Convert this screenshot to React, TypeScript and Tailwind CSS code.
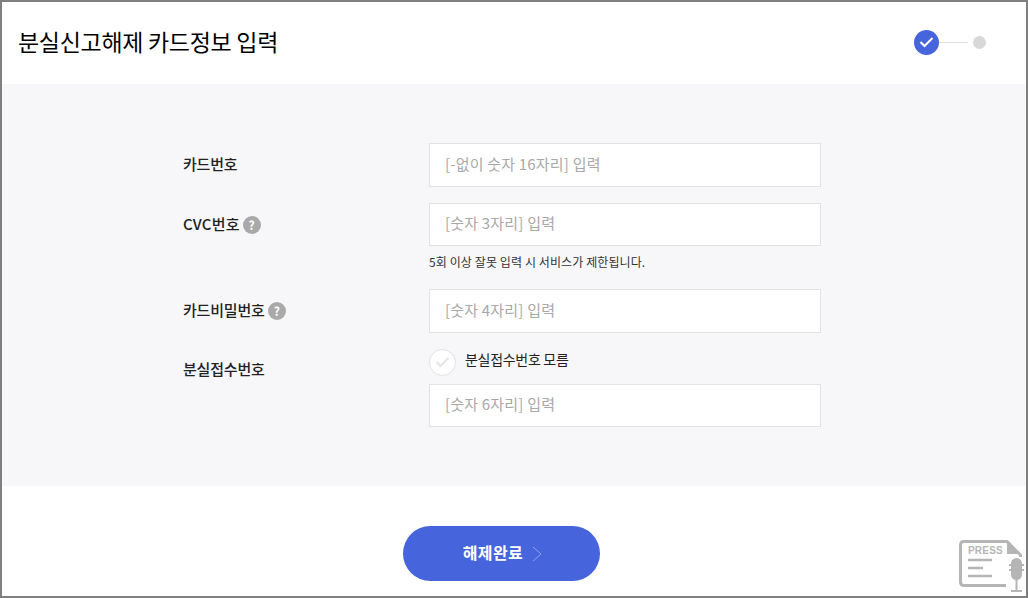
import React from "react";

function Help() {
  return (
    <span className="ml-[3px] inline-flex h-[18px] w-[18px] items-center justify-center rounded-full bg-[#a9a9a9] text-[12px] font-bold leading-none text-white">?</span>
  );
}

function Field({ placeholder, short }: { placeholder: string; short?: boolean }) {
  return (
    <div className={`flex w-[392px] items-center border border-[#e2e2e2] bg-white pb-[2px] pl-[15px] text-[15px] tracking-[0.2px] text-[#a8a8a8] ${short ? "h-[43px]" : "h-[44px]"}`}>
      {placeholder}
    </div>
  );
}

function Label({ text, help, wide }: { text: string; help?: boolean; wide?: boolean }) {
  return (
    <div className={`flex h-[44px] w-[246px] shrink-0 items-center pb-[1px] text-[15px] font-medium text-[#222222] ${wide ? "tracking-[0.2px]" : "tracking-[-0.2px]"}`}>
      {text}
      {help && <Help />}
    </div>
  );
}

export default function App() {
  return (
    <div className="h-[598px] w-[1028px] overflow-hidden border-2 border-[#7f7f7f] bg-white font-['Noto_Sans_CJK_KR','Noto_Sans',sans-serif]">
      <header className="flex h-[82px] items-center justify-between pb-[2px] pl-[16px] pr-[40px]">
        <h1 className="pb-[2px] text-[23px] font-normal leading-none tracking-[-0.3px] text-[#000000]">분실신고해제 카드정보 입력</h1>
        <div className="flex items-center">
          <span className="flex h-[25px] w-[25px] items-center justify-center rounded-full bg-[#4664dc]">
            <svg width="15" height="12" viewBox="0 0 15 12" fill="none" stroke="#ffffff" strokeWidth="2">
              <path d="M1.5 6 L5.5 10 L13.5 2" />
            </svg>
          </span>
          <span className="h-[1px] w-[29px] bg-[#dddddd]" />
          <span className="ml-[5px] h-[13px] w-[13px] rounded-full bg-[#d8d8d8]" />
        </div>
      </header>

      <section className="h-[402px] bg-[#f7f7f9] pl-[181px] pt-[59px]">
        <div className="flex">
          <Label text="카드번호" />
          <Field placeholder="[-없이 숫자 16자리] 입력" />
        </div>
        <div className="mt-[16px] flex">
          <Label text="CVC번호" help wide />
          <div>
            <Field placeholder="[숫자 3자리] 입력" short />
            <p className="mt-[7px] h-[19px] text-[12px] leading-[18px] tracking-[0.1px] text-[#333333]">5회 이상 잘못 입력 시 서비스가 제한됩니다.</p>
          </div>
        </div>
        <div className="mt-[17px] flex">
          <Label text="카드비밀번호" help />
          <Field placeholder="[숫자 4자리] 입력" />
        </div>
        <div className="mt-[15px] flex">
          <Label text="분실접수번호" />
          <div>
            <div className="flex h-[28px] items-center">
              <span className="flex h-[27px] w-[27px] items-center justify-center rounded-full border border-[#e2e2e2] bg-white">
                <svg width="15" height="12" viewBox="0 0 15 12" fill="none" stroke="#e4e4e4" strokeWidth="2">
                  <path d="M1.5 6 L5.5 10 L13.5 2" />
                </svg>
              </span>
              <span className="ml-[9px] pb-[5px] text-[14px] tracking-[-0.3px] text-[#222222]">분실접수번호 모름</span>
            </div>
            <div className="mt-[8px]">
              <Field placeholder="[숫자 6자리] 입력" short />
            </div>
          </div>
        </div>
      </section>

      <div className="relative h-[110px] pl-[401px] pt-[40px]">
        <button className="flex h-[55px] w-[197px] items-center justify-center rounded-full bg-[#4664dc] pb-[3px] pl-[2px] text-[16px] font-bold tracking-[0.4px] text-white">
          해제완료
          <svg className="ml-[9px] mt-[3px]" width="10" height="16" viewBox="0 0 10 16" fill="none" stroke="#8fa2ea" strokeWidth="1">
            <path d="M1 1 L9 8 L1 15" />
          </svg>
        </button>
        <svg className="absolute left-[957px] top-[54px]" width="67" height="54" viewBox="0 0 67 54" fill="none">
          <path d="M61.5 17 V15 L48 1.5 H5 Q1.5 1.5 1.5 5 V42 Q1.5 45.5 5 45.5 H47" stroke="#b5b5b5" strokeWidth="3" />
          <path d="M48 2 V14 H61 Z" fill="#b5b5b5" />
          <text x="9" y="14" fontSize="10" fontWeight="700" fontFamily="Liberation Sans" fill="#b5b5b5" letterSpacing="0.2">PRESS</text>
          <path d="M9 20 H33 M9 28 H24 M9 36 H33" stroke="#b5b5b5" strokeWidth="2.5" />
          <rect x="52" y="18" width="11" height="22" rx="5.5" fill="#b5b5b5" />
          <path d="M50 25 H54 M50 30 H54 M61 25 H65 M61 30 H65 M57.5 40 V50 M52 51 H63" stroke="#b5b5b5" strokeWidth="2" />
        </svg>
      </div>
    </div>
  );
}
